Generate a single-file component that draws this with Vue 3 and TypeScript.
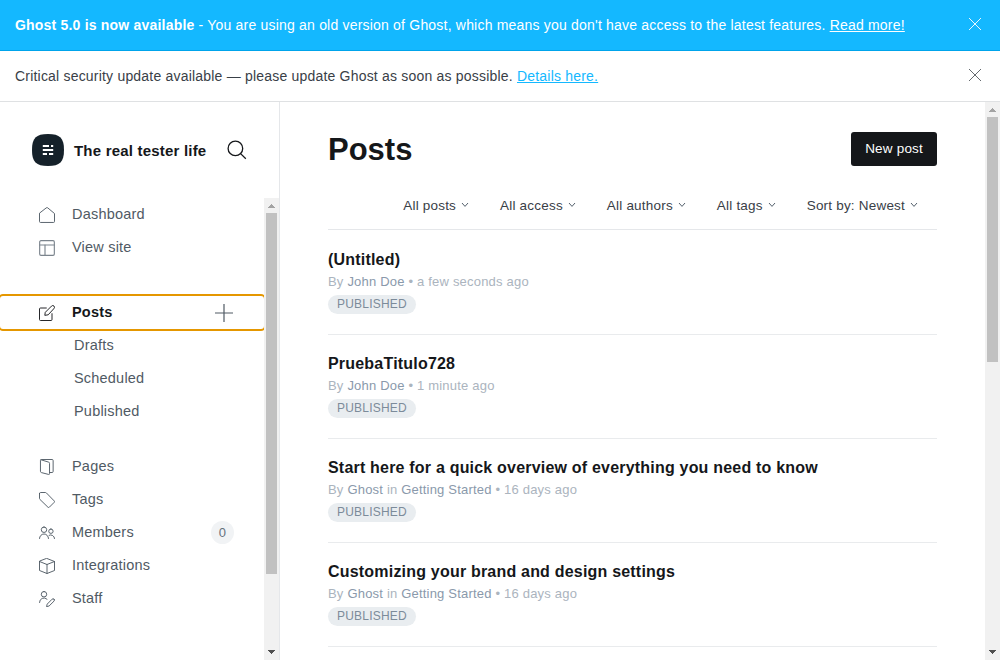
<script setup lang="ts">
interface NavItem {
  label: string
  icon: string
  count?: number
}

interface Post {
  title: string
  author: string
  tag?: string
  time: string
}

const topNav: NavItem[] = [
  { label: 'Dashboard', icon: 'home' },
  { label: 'View site', icon: 'layout' },
]
const postViews: string[] = ['Drafts', 'Scheduled', 'Published']
const manageNav: NavItem[] = [
  { label: 'Pages', icon: 'pages' },
  { label: 'Tags', icon: 'tag' },
  { label: 'Members', icon: 'members', count: 0 },
  { label: 'Integrations', icon: 'box' },
  { label: 'Staff', icon: 'staff' },
]
const filters: string[] = ['All posts', 'All access', 'All authors', 'All tags', 'Sort by: Newest']
const posts: Post[] = [
  { title: '(Untitled)', author: 'John Doe', time: 'a few seconds ago' },
  { title: 'PruebaTitulo728', author: 'John Doe', time: '1 minute ago' },
  { title: 'Start here for a quick overview of everything you need to know', author: 'Ghost', tag: 'Getting Started', time: '16 days ago' },
  { title: 'Customizing your brand and design settings', author: 'Ghost', tag: 'Getting Started', time: '16 days ago' },
]

// Outlines on a 24-unit grid, keyed by icon name
const icons: Record<string, string[]> = {
  home: ['M.75 9.8V21.7a1.5 1.5 0 0 0 1.5 1.5h19.5a1.5 1.5 0 0 0 1.5-1.5V9.8L13 1.2a1.5 1.5 0 0 0-2 0z'],
  layout: ['M3 1h18a2 2 0 0 1 2 2v18a2 2 0 0 1-2 2H3a2 2 0 0 1-2-2V3a2 2 0 0 1 2-2z', 'M1 7.5h22', 'M9 7.5v15.5'],
  pages: ['M3 1.2L14.2 4.6a2 2 0 0 1 1.6 2V22a1.2 1.2 0 0 1-1.6 1.1L3.7 20.4a2 2 0 0 1-1.5-1.9V2.25A1.5 1.5 0 0 1 3.7.75h16a1.5 1.5 0 0 1 1.5 1.5v16.5a1.5 1.5 0 0 1-1.5 1.5h-3.9'],
  tag: ['M.75 2.25v7.6a1.5 1.5 0 0 0 .44 1.06L13.4 22.8a1.5 1.5 0 0 0 2.1 0l7.3-7.3a1.5 1.5 0 0 0 0-2.1L10.9 1.2A1.5 1.5 0 0 0 9.85.75h-7.6a1.5 1.5 0 0 0-1.5 1.5z'],
  members: ['M7.5 3a4.1 4.1 0 1 0 0 8.2 4.1 4.1 0 1 0 0-8.2z', 'M.75 20.25a6.75 6.75 0 0 1 13.5 0', 'M17.9 6a3.3 3.3 0 1 0 0 6.6 3.3 3.3 0 1 0 0-6.6z', 'M15.2 15.4a5.5 5.5 0 0 1 8.1 4.9'],
  box: ['M12 .75l11.25 4.5v13.5L12 23.25.75 18.75V5.25z', 'M.75 5.25L12 9.75l11.25-4.5', 'M12 9.75v13.5'],
  staff: ['M7.5.75a4.1 4.1 0 1 0 0 8.2 4.1 4.1 0 1 0 0-8.2z', 'M.75 17.25a6.75 6.75 0 0 1 11.3-5', 'M22.6 12.3a2.1 2.1 0 0 0-3 0l-7.3 7.4-1 3.8 3.8-1 7.4-7.3a2.1 2.1 0 0 0 .1-2.9z'],
  edit: ['M19.5 13v8.75a1.5 1.5 0 0 1-1.5 1.5H2.25a1.5 1.5 0 0 1-1.5-1.5V6a1.5 1.5 0 0 1 1.5-1.5H11', 'M13.2 14.8l-4.5.7.7-4.5L18.8 1.6a2.6 2.6 0 0 1 3.7 3.7z'],
}
</script>

<template>
  <div class="app">
    <div class="alert alert-blue">
      <p><b>Ghost 5.0 is now available</b> - You are using an old version of Ghost, which means you don't have access to the latest features. <a>Read more!</a></p>
      <svg class="close" viewBox="0 0 12 12"><path d="M0 0L12 12M12 0L0 12" /></svg>
    </div>
    <div class="alert alert-plain">
      <p>Critical security update available — please update Ghost as soon as possible. <a>Details here.</a></p>
      <svg class="close" viewBox="0 0 12 12"><path d="M0 0L12 12M12 0L0 12" /></svg>
    </div>

    <div class="viewport">
      <aside class="sidebar">
        <header class="site">
          <svg class="logo" viewBox="0 0 32 32">
            <path class="logo-bg" d="M16 0C28 0 32 4 32 16S28 32 16 32 0 28 0 16 4 0 16 0z" />
            <path class="logo-mark" d="M10.8 10.9h6.2v2h-6.2zM19 10.9h2.2v2H19zM10.8 15h10.4v2H10.8zM10.8 19.1h4.2v2h-4.2zM17 19.1h4.2v2H17z" />
          </svg>
          <span class="site-name">The real tester life</span>
          <svg class="search" viewBox="0 0 20 20"><circle cx="8.4" cy="8.4" r="7.3" /><path d="M13.6 13.6L18.8 18.8" /></svg>
        </header>

        <div class="nav-area">
          <nav class="nav">
            <ul>
              <li v-for="item in topNav" :key="item.label" class="row">
                <svg class="icon" :class="item.icon" viewBox="0 0 24 24"><path v-for="d in icons[item.icon]" :key="d" :d="d" /></svg>
                <span>{{ item.label }}</span>
              </li>
            </ul>
            <ul class="posts-group">
              <li class="row active">
                <svg class="icon" viewBox="0 0 24 24"><path v-for="d in icons.edit" :key="d" :d="d" /></svg>
                <span>Posts</span>
                <svg class="plus" viewBox="0 0 18 18"><path d="M9 0V18M0 9H18" /></svg>
              </li>
              <li v-for="view in postViews" :key="view" class="row sub">{{ view }}</li>
            </ul>
            <ul class="manage-group">
              <li v-for="item in manageNav" :key="item.label" class="row">
                <svg class="icon" viewBox="0 0 24 24"><path v-for="d in icons[item.icon]" :key="d" :d="d" /></svg>
                <span>{{ item.label }}</span>
                <span v-if="item.count !== undefined" class="count">{{ item.count }}</span>
              </li>
            </ul>
          </nav>
          <div class="scrollbar">
            <svg class="arrow" viewBox="0 0 15 15"><path class="dim" d="M7 6h1v1h1v1h1v1h1v1H4V9h1V8h1V7h1z" /></svg>
            <div class="track"><div class="thumb thumb-nav"></div></div>
            <svg class="arrow" viewBox="0 0 15 15"><path d="M4 5h7v1h-1v1H9v1H8v1H7V8H6V7H5V6H4z" /></svg>
          </div>
        </div>
      </aside>

      <main class="main">
        <div class="content">
          <header class="head">
            <h1>Posts</h1>
            <a class="button">New post</a>
          </header>
          <div class="filters">
            <div v-for="filter in filters" :key="filter" class="filter">
              <span>{{ filter }}</span>
              <svg viewBox="0 0 8 6"><path d="M1 1L4 4.4L7 1" /></svg>
            </div>
          </div>
          <ol class="posts">
            <li v-for="post in posts" :key="post.title" class="post">
              <h3>{{ post.title }}</h3>
              <p class="meta">By <span>{{ post.author }}</span><template v-if="post.tag"> in <span>{{ post.tag }}</span></template> • {{ post.time }}</p>
              <span class="status">PUBLISHED</span>
            </li>
          </ol>
        </div>
        <div class="scrollbar">
          <svg class="arrow" viewBox="0 0 15 15"><path class="dim" d="M7 6h1v1h1v1h1v1h1v1H4V9h1V8h1V7h1z" /></svg>
          <div class="track"><div class="thumb thumb-main"></div></div>
          <svg class="arrow" viewBox="0 0 15 15"><path d="M4 5h7v1h-1v1H9v1H8v1H7V8H6V7H5V6H4z" /></svg>
        </div>
      </main>
    </div>
  </div>
</template>

<style>
body {
  margin: 0;
  background: #fff;
}
</style>

<style scoped>
* {
  box-sizing: border-box;
}
.app {
  display: flex;
  flex-direction: column;
  height: 100vh;
  overflow: hidden;
  font-family: "Liberation Sans", Arial, sans-serif;
  letter-spacing: 0.2px;
  color: #394047;
}
ul,
ol,
p,
h1,
h3 {
  margin: 0;
  padding: 0;
  list-style: none;
}
svg {
  flex: none;
  display: block;
  fill: none;
}

.alert {
  flex: none;
  display: flex;
  align-items: center;
  justify-content: space-between;
  height: 51px;
  padding: 0 19px 0 15px;
  font-size: 14px;
  line-height: 20px;
  border-bottom: 1px solid #dfe1e3;
}
.alert a {
  text-decoration: underline;
}
.alert-blue {
  background: #14b8ff;
  border-color: #00a4eb;
  color: #fff;
}
.alert-plain a {
  color: #14b8ff;
}
.close {
  width: 12px;
  height: 12px;
  margin-top: -2px;
  stroke: #54595f;
  stroke-width: 0.9;
}
.alert-blue .close {
  stroke: #fff;
}

.viewport {
  flex: 1;
  min-height: 0;
  display: flex;
}
.sidebar {
  width: 280px;
  flex: none;
  display: flex;
  flex-direction: column;
  border-right: 1px solid #e5e7ea;
}
.site {
  flex: none;
  height: 96px;
  padding: 0 32px;
  display: flex;
  align-items: center;
}
.logo {
  width: 32px;
  height: 32px;
}
.logo-bg {
  fill: #15212a;
}
.logo-mark {
  fill: #fff;
}
.site-name {
  flex: 1;
  margin-left: 10px;
  font-size: 15px;
  font-weight: 700;
  color: #15171a;
  white-space: nowrap;
}
.search {
  width: 20px;
  height: 20px;
  stroke: #15171a;
  stroke-width: 1.3;
}
.nav-area {
  flex: 1;
  min-height: 0;
  display: flex;
}
.nav {
  flex: 1;
  overflow: hidden;
}
.posts-group {
  margin-top: 32px;
}
.manage-group {
  margin-top: 22px;
}
.row {
  display: flex;
  align-items: center;
  height: 33px;
  padding: 0 30px 2px 39px;
  font-size: 14.5px;
  color: #505a64;
}
.row > span:first-of-type {
  flex: 1;
}
.icon {
  width: 16px;
  height: 16px;
  margin: 3px 17px 0 0;
  stroke: #505a64;
  stroke-width: 1.4;
  stroke-linejoin: round;
  stroke-linecap: round;
}
.layout {
  stroke: #7b848d;
  stroke-width: 1.7;
}
.active {
  font-weight: 700;
  color: #15171a;
  outline: 2px solid #e59700;
  border-radius: 3px;
}
.active .icon {
  stroke: #15171a;
}
.plus {
  width: 18px;
  height: 18px;
  margin: 3px 1px 0 0;
  stroke: #505a64;
  stroke-width: 1.2;
}
.sub {
  padding-left: 74px;
}
.count {
  height: 23px;
  min-width: 23px;
  margin-top: 2px;
  border-radius: 12px;
  background: #f1f3f5;
  color: #66717c;
  font-size: 13px;
  line-height: 23px;
  text-align: center;
}

.scrollbar {
  width: 15px;
  flex: none;
  display: flex;
  flex-direction: column;
  background: #f1f1f1;
}
.arrow {
  width: 15px;
  height: 15px;
  fill: #505050;
}
.arrow .dim {
  fill: #a3a3a3;
}
.track {
  flex: 1;
  padding: 0 2px;
}
.thumb {
  background: #c1c1c1;
}
.thumb-nav {
  height: 361px;
}
.thumb-main {
  height: 245px;
}

.main {
  flex: 1;
  min-width: 0;
  display: flex;
}
.content {
  flex: 1;
  min-width: 0;
  padding: 30px 48px 0;
  overflow: hidden;
}
.head {
  display: flex;
  align-items: center;
  justify-content: space-between;
  height: 34px;
}
h1 {
  padding-top: 2px;
  font-size: 31px;
  line-height: 34px;
  letter-spacing: 0;
  color: #15171a;
}
.button {
  height: 34px;
  padding: 0 14px;
  border-radius: 3px;
  background: #15171a;
  color: #fff;
  font-size: 13.5px;
  line-height: 33px;
}
.filters {
  display: flex;
  justify-content: flex-end;
  align-items: center;
  gap: 31px;
  height: 64px;
  padding: 15px 19px 0 0;
  border-bottom: 1px solid #e5e7ea;
  font-size: 13.5px;
}
.filter {
  display: flex;
  align-items: center;
  gap: 5px;
}
.filter svg {
  width: 8px;
  height: 6px;
  stroke: #54606c;
  stroke-width: 1;
}
.post {
  height: 104px;
  padding: 19px 0 0;
  border-bottom: 1px solid #e9ebed;
}
.post:first-child {
  height: 105px;
  padding-top: 20px;
}
h3 {
  font-size: 16px;
  line-height: 20px;
  color: #15171a;
}
.meta {
  margin-top: 2px;
  font-size: 13px;
  line-height: 20px;
  color: #abb4be;
}
.meta span {
  color: #8a99ab;
}
.status {
  display: block;
  width: fit-content;
  height: 19px;
  margin-top: 3px;
  padding: 0 9px;
  border-radius: 10px;
  background: #e9edf0;
  color: #7c8b9a;
  font-size: 12px;
  line-height: 19px;
}
</style>
